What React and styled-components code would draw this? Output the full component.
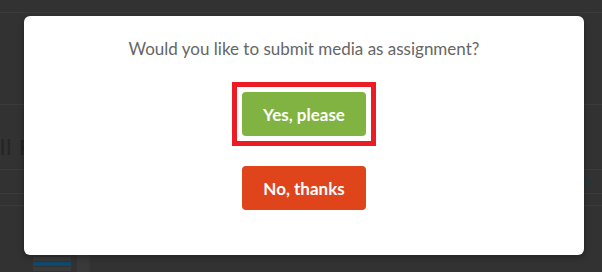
import React from "react";
import styled, { createGlobalStyle } from "styled-components";

const Global = createGlobalStyle`
  html, body { margin: 0; padding: 0; }
  body {
    width: 602px;
    height: 272px;
    overflow: hidden;
    background: #333333;
    font-family: Lato, "Liberation Sans", sans-serif;
  }
`;

const Page = styled.div`
  position: relative;
  width: 602px;
  height: 272px;
  background: #323232;
  overflow: hidden;
`;

const Backdrop = styled.div`
  display: flex;
  flex-direction: column;
  width: 100%;
  height: 100%;
`;

const Rule = styled.div`
  height: 1px;
  background: #3a3a3a;
  margin-top: ${(p) => p.$top}px;
`;

const GhostRow = styled.div`
  display: flex;
  align-items: center;
  height: 26px;
  margin-top: 28px;
  color: #242424;
  font-size: 22px;
  letter-spacing: 1px;
  justify-content: space-between;
`;

const GhostEnd = styled.span`
  color: #1d3940;
  font-size: 20px;
  margin-top: 66px;
  padding-right: 10px;
`;

const Footer = styled.div`
  display: flex;
  align-items: flex-start;
  margin-top: auto;
  height: 17px;
  padding-left: 33px;
  gap: 0;
`;

const MiniList = styled.div`
  display: flex;
  flex-direction: column;
  width: 38px;
  gap: 1px;
  padding-top: 2px;
`;

const MiniItem = styled.div`
  height: 4px;
  background: ${(p) => (p.$active ? "#0f4a6e" : "#3b3b3b")};
`;

const Column = styled.div`
  width: 12px;
  height: 17px;
  margin-left: 6px;
  background: #393939;
`;

const RedLine = styled.div`
  width: 1px;
  height: 17px;
  background: #6a2020;
`;

const Modal = styled.div`
  position: absolute;
  left: 24px;
  top: 16px;
  width: 560px;
  height: 239px;
  box-sizing: border-box;
  background: #ffffff;
  border-radius: 6px;
  box-shadow: 0 2px 6px rgba(0, 0, 0, 0.35);
  display: flex;
  flex-direction: column;
  align-items: center;
  padding-top: 23px;
`;

const Question = styled.p`
  margin: 0;
  font-size: 17px;
  line-height: 20px;
  color: #666666;
  font-weight: 400;
`;

const Actions = styled.div`
  display: flex;
  flex-direction: column;
  align-items: center;
  gap: 20px;
  margin-top: 23px;
`;

const FocusRing = styled.div`
  display: flex;
  padding: 5px;
  border: 5px solid ${(p) => (p.$on ? "#ec1c24" : "transparent")};
`;

const Button = styled.button`
  width: 124px;
  height: 44px;
  border: none;
  border-radius: 4px;
  background: ${(p) => p.$bg};
  color: #ffffff;
  font-family: Lato, "Liberation Sans", sans-serif;
  font-weight: 700;
  font-size: 17px;
  cursor: pointer;
  outline: none;
  padding: 0;
`;

export default function App() {
  return (
    <>
      <Global />
      <Page>
        <Backdrop>
          <Rule $top={12} />
          <Rule $top={91} />
          <GhostRow>
            <span>ll F</span>
            <GhostEnd>n</GhostEnd>
          </GhostRow>
          <Rule $top={10} />
          <Rule $top={23} />
          <Rule $top={11} />
          <Footer>
            <MiniList>
              <MiniItem />
              <MiniItem $active />
              <MiniItem />
            </MiniList>
            <Column />
            <RedLine />
          </Footer>
        </Backdrop>
        <Modal>
          <Question>Would you like to submit media as assignment?</Question>
          <Actions>
            <FocusRing $on>
              <Button $bg="#80b341">Yes, please</Button>
            </FocusRing>
            <Button $bg="#e0441b">No, thanks</Button>
          </Actions>
        </Modal>
      </Page>
    </>
  );
}
